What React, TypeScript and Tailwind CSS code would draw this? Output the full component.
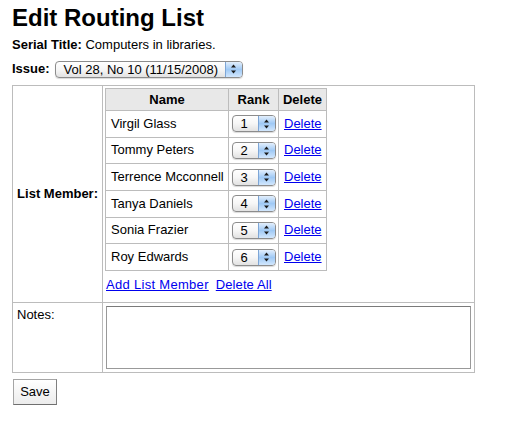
import React from "react";

const MEMBERS = [
  { name: "Virgil Glass", rank: 1 },
  { name: "Tommy Peters", rank: 2 },
  { name: "Terrence Mcconnell", rank: 3 },
  { name: "Tanya Daniels", rank: 4 },
  { name: "Sonia Frazier", rank: 5 },
  { name: "Roy Edwards", rank: 6 },
];

function Arrows() {
  return (
    <svg width="7" height="10" viewBox="0 0 7 10" aria-hidden="true">
      <path d="M3.5 0.5 L6 3.5 L1 3.5 Z" fill="#1a1a1a" />
      <path d="M1 6.5 L6 6.5 L3.5 9.5 Z" fill="#1a1a1a" />
    </svg>
  );
}

// Aqua style popup button, like the old Safari select
function PopUp({ value, className }: { value: string; className: string }) {
  return (
    <div
      className={`inline-flex h-[17px] items-stretch overflow-hidden rounded-[4px] border border-[#8c8c8c] bg-gradient-to-b from-white via-[#f6f6f6] to-[#e2e2e2] text-left shadow-[0_1px_1px_rgba(0,0,0,0.15)] ${className}`}
    >
      <span className="flex-1 truncate pl-[8px] text-[13px] leading-[15px] text-black">{value}</span>
      <span className="flex w-[17px] items-center justify-center border-l border-[#7ea6d6] bg-gradient-to-b from-[#e3effc] via-[#9fc9f5] to-[#d2e7fd]">
        <Arrows />
      </span>
    </div>
  );
}

export default function App() {
  return (
    <div className="min-h-[421px] bg-white px-3 pt-[4px] font-['Liberation_Sans',Arial,sans-serif] text-[13px] leading-[16px] text-black">
      <h1 className="text-[24px] font-bold leading-[28px]">Edit Routing List</h1>

      <p className="mt-[5px]">
        <b>Serial Title:</b> Computers in libraries.
      </p>

      <div className="mt-[7px] flex h-[18px] items-center gap-[5px]">
        <b className="leading-[16px]">Issue:</b>
        <PopUp value="Vol 28, No 10 (11/15/2008)" className="w-[188px]" />
      </div>

      <table className="mt-[7px] w-[463px] table-fixed border-collapse border border-[#bcbcbc]">
        <colgroup>
          <col className="w-[90px]" />
          <col />
        </colgroup>
        <tbody>
          <tr>
            <th className="border border-[#bcbcbc] pr-[4px] text-right align-middle font-bold">List Member:</th>
            <td className="border border-[#bcbcbc] px-[2px] pt-[2px] pb-[9px] align-top">
              <table className="w-[222px] table-fixed border-collapse border border-[#bcbcbc]">
                <colgroup>
                  <col className="w-[123px]" />
                  <col className="w-[50px]" />
                  <col className="w-[48px]" />
                </colgroup>
                <thead>
                  <tr className="h-[22px] bg-[#e8e8e8]">
                    <th className="border border-[#bcbcbc] text-center font-bold">Name</th>
                    <th className="border border-[#bcbcbc] text-center font-bold">Rank</th>
                    <th className="border border-[#bcbcbc] text-center font-bold">Delete</th>
                  </tr>
                </thead>
                <tbody>
                  {MEMBERS.map((m) => (
                    <tr key={m.name} className="h-[26.67px]">
                      <td className="whitespace-nowrap border border-[#bcbcbc] pl-[5px] align-middle">{m.name}</td>
                      <td className="border border-[#bcbcbc] text-center align-middle">
                        <PopUp value={String(m.rank)} className="w-[44px] align-middle" />
                      </td>
                      <td className="border border-[#bcbcbc] pl-[5px] align-middle">
                        <a href="#" className="text-[#0000ee] underline">
                          Delete
                        </a>
                      </td>
                    </tr>
                  ))}
                </tbody>
              </table>
              <div className="mt-[6px] flex gap-[7px]">
                <a href="#" className="ml-px tracking-[0.3px] text-[#0000ee] underline">
                  Add List Member
                </a>
                <a href="#" className="tracking-[0.1px] text-[#0000ee] underline">
                  Delete All
                </a>
              </div>
            </td>
          </tr>
          <tr>
            <td className="border border-[#bcbcbc] pl-[4px] pt-[4px] align-top">Notes:</td>
            <td className="border border-[#bcbcbc] px-[3px] pt-[3px] pb-[3px]">
              <textarea className="block h-[63px] w-[365px] resize-none border border-[#999] border-t-[#7a7a7a] bg-white" />
            </td>
          </tr>
        </tbody>
      </table>

      <button className="mt-[6px] ml-px h-[26px] w-[44px] border border-[#a5a5a5] border-b-[#6f6f6f] border-r-[#7f7f7f] bg-gradient-to-b from-white to-[#ececec] text-[13px] leading-[16px]">
        Save
      </button>
    </div>
  );
}
